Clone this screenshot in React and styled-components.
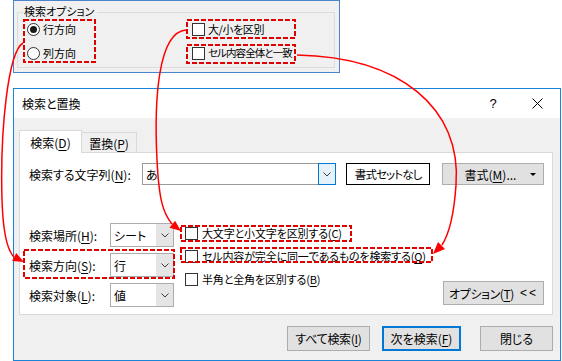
import React from "react";
import styled, { createGlobalStyle } from "styled-components";

const GlobalStyle = createGlobalStyle`
  * { box-sizing: border-box; }
  body {
    margin: 0;
    background: #fff;
    color: #000;
    font-family: "Noto Sans CJK JP", "Noto Sans", sans-serif;
    font-size: 12px;
    font-feature-settings: "palt";
  }
`;

const Page = styled.div`
  position: relative;
  width: 562px;
  height: 361px;
  padding-left: 13px;
  overflow: hidden;
`;

const U = styled.span`
  text-decoration: underline;
  text-underline-offset: 2px;
  text-decoration-thickness: 1px;
`;

/* ---------- old options panel ---------- */

const TopPanel = styled.div`
  display: flex;
  flex-direction: column;
  width: 327px;
  height: 73px;
  padding: 4px 4px 4px 3px;
  background: #f0f0f0;
  border: 1px solid #4c84cc;
`;

const OptionGroup = styled.fieldset`
  flex: 1;
  min-width: 0;
  margin: 0;
  padding: 0;
  border: 1px solid #dcdcdc;
`;

const GroupLegend = styled.legend`
  margin-left: 5px;
  padding: 0 3px 3px 1px;
  font-size: 11px;
  line-height: 12px;
`;

const OptionGrid = styled.div`
  display: grid;
  grid-template-columns: 165px 1fr;
  grid-template-rows: 18px 18px;
  grid-auto-flow: column;
  row-gap: 6px;
  padding-left: 9px;
`;

const Choice = styled.div`
  display: flex;
  align-items: center;
  gap: ${(p) => p.$gap || 3}px;
  font-size: ${(p) => p.$size || 12}px;
  letter-spacing: ${(p) => p.$spacing || 0}px;
  line-height: 16px;
  white-space: nowrap;
`;

const RadioMark = styled.span`
  display: flex;
  align-items: center;
  justify-content: center;
  width: 13px;
  height: 13px;
  border: 1px solid #333;
  border-radius: 50%;
  background: #fff;
  &::after {
    content: "";
    width: 7px;
    height: 7px;
    border-radius: 50%;
    background: ${(p) => (p.$checked ? "#1a1a1a" : "transparent")};
  }
`;

const CheckMark = styled.span`
  flex: none;
  width: 13px;
  height: 13px;
  border: 1px solid #333;
  background: #fff;
`;

/* ---------- dialog ---------- */

const Dialog = styled.div`
  display: flex;
  flex-direction: column;
  width: 548px;
  height: 273px;
  margin-top: 15px;
  background: #f0f0f0;
  border: 1px solid #1a84d8;
`;

const TitleBar = styled.div`
  display: flex;
  align-items: center;
  height: 29px;
  padding-left: 8px;
  background: #fff;
`;

const TitleText = styled.div`
  flex: 1;
  font-size: 12px;
`;

const TitleButton = styled.div`
  display: flex;
  align-items: center;
  justify-content: center;
  width: ${(p) => p.$w}px;
  height: 29px;
  font-family: "Liberation Sans", sans-serif;
  font-size: 13px;
`;

const DialogBody = styled.div`
  flex: 1;
  display: flex;
  flex-direction: column;
  padding: 12px 7px 0 5px;
`;

const TabList = styled.div`
  position: relative;
  z-index: 1;
  display: flex;
  align-items: flex-end;
  height: 23px;
  margin-bottom: -1px;
`;

const Tab = styled.div`
  display: flex;
  align-items: center;
  justify-content: center;
  width: ${(p) => p.$w}px;
  height: ${(p) => (p.$active ? 23 : 20)}px;
  margin-bottom: ${(p) => (p.$active ? 0 : 1)}px;
  padding-top: 1px;
  border: 1px solid #d9d9d9;
  border-bottom: none;
  border-left: ${(p) => (p.$active ? "1px solid #d9d9d9" : "none")};
  background: ${(p) => (p.$active ? "#fff" : "#f0f0f0")};
  font-size: 12px;
`;

const TabPanel = styled.div`
  display: flex;
  flex-direction: column;
  height: 163px;
  padding: 10px 8px 0 9px;
  background: #fff;
  border: 1px solid #d9d9d9;
`;

const FindRow = styled.div`
  display: flex;
  align-items: center;
  height: 22px;
`;

const FieldLabel = styled.div`
  flex: none;
  width: ${(p) => p.$w}px;
  font-size: 12px;
  white-space: nowrap;
`;

const Combo = styled.div`
  display: flex;
  width: 195px;
  height: 22px;
  border: 1px solid #9a9a9a;
  background: #fff;
`;

const FieldText = styled.div`
  flex: 1;
  display: flex;
  align-items: center;
  padding-left: 3px;
  font-size: 12px;
`;

const ComboButton = styled.div`
  display: flex;
  align-items: center;
  justify-content: center;
  width: 18px;
  margin: -1px -1px -1px 0;
  border: 1px solid #0078d7;
  background: #e5f1fb;
`;

const FormatPreview = styled.div`
  display: flex;
  align-items: center;
  justify-content: center;
  width: 84px;
  height: 22px;
  margin-left: 10px;
  border: 1px solid #000;
  background: #fff;
  font-size: 11.5px;
  letter-spacing: -0.9px;
`;

const Button = styled.div`
  display: flex;
  align-items: center;
  justify-content: center;
  flex: none;
  width: ${(p) => p.$w}px;
  height: ${(p) => p.$h || 22}px;
  margin-left: ${(p) => p.$ml || 0}px;
  background: #e1e1e1;
  border: ${(p) => (p.$primary ? "2px solid #0078d7" : "1px solid #adadad")};
  font-size: 12px;
  letter-spacing: ${(p) => p.$spacing || 0}px;
  white-space: nowrap;
`;

const MenuButtonText = styled.span`
  flex: 1;
  text-align: center;
  padding-left: 8px;
`;

const MenuArrow = styled.span`
  width: 0;
  height: 0;
  margin-right: 7px;
  border-left: 3px solid transparent;
  border-right: 3px solid transparent;
  border-top: 3px solid #000;
`;

const Chevrons = styled.span`
  margin-left: 6px;
  letter-spacing: 2px;
  font-family: "Liberation Sans", sans-serif;
`;

const LowerSection = styled.div`
  display: flex;
  align-items: flex-start;
  margin-top: 38px;
`;

const SelectColumn = styled.div`
  display: flex;
  flex-direction: column;
  gap: 6px;
`;

const SelectRow = styled.div`
  display: flex;
  align-items: center;
  height: 24px;
`;

const Select = styled.div`
  display: flex;
  width: 64px;
  height: 24px;
  border: 1px solid #acacac;
  background: #fff;
`;

const SelectButton = styled.div`
  display: flex;
  align-items: center;
  justify-content: center;
  width: 17px;
  background: #e5e5e5;
`;

const CheckColumn = styled.div`
  display: flex;
  flex-direction: column;
  gap: 5px;
  margin: 1px 0 0 11px;
`;

const CheckRow = styled(Choice)`
  height: 18px;
`;

const OptionsToggle = styled(Button)`
  margin-left: auto;
  margin-top: 58px;
`;

const ButtonRow = styled.div`
  display: flex;
  justify-content: flex-end;
  margin-top: 11px;
`;

const Overlay = styled.svg`
  position: absolute;
  top: 0;
  left: 0;
  pointer-events: none;
`;

const Chevron = () => (
  <svg width="8" height="5" viewBox="0 0 8 5">
    <polyline points="0.5,0.5 4,4 7.5,0.5" fill="none" stroke="#404040" strokeWidth="1" />
  </svg>
);

const Close = () => (
  <svg width="11" height="11" viewBox="0 0 11 11">
    <path d="M0.5 0.5 L10.5 10.5 M10.5 0.5 L0.5 10.5" stroke="#000" strokeWidth="1" />
  </svg>
);

const selects = [
  { label: <>検索場所(<U>H</U>):</>, value: "シート" },
  { label: <>検索方向(<U>S</U>):</>, value: "行" },
  { label: <>検索対象(<U>L</U>):</>, value: "値" },
];

const checks = [
  <>大文字と小文字を区別する(<U>C</U>)</>,
  <>セル内容が完全に同一であるものを検索する(<U>O</U>)</>,
  <>半角と全角を区別する(<U>B</U>)</>,
];

const boxes = [
  [24, 20, 71, 42],
  [187, 20, 108, 18],
  [187, 45, 108, 18],
  [24, 250, 150, 28],
  [181, 226, 170, 15],
  [181, 248, 251, 14],
];

const curves = [
  {
    d: "M 23 43 C 8 52, 0 130, 2 200 C 3 232, 7 250, 14 257",
    head: "24,262 12.2,261.1 16.2,253.1",
  },
  {
    d: "M 186 30 C 158 32, 154 100, 157 160 C 159 200, 163 213, 172 224",
    head: "181,231 169.5,227.8 175.1,220.7",
  },
  {
    d: "M 297 55 C 400 57, 462 108, 456 185 C 454 215, 449 234, 442 245",
    head: "433,254 445,249 438,242",
  },
];

export default function App() {
  return (
    <Page>
      <GlobalStyle />

      <TopPanel>
        <OptionGroup>
          <GroupLegend>検索オプション</GroupLegend>
          <OptionGrid>
            <Choice $size={11} $gap={3}>
              <RadioMark $checked />行方向
            </Choice>
            <Choice $size={11} $gap={3}>
              <RadioMark />列方向
            </Choice>
            <Choice $size={11} $gap={3} $spacing={-0.4}>
              <CheckMark />大/小を区別
            </Choice>
            <Choice $size={10.5} $gap={3} $spacing={-0.9}>
              <CheckMark />セル内容全体と一致
            </Choice>
          </OptionGrid>
        </OptionGroup>
      </TopPanel>

      <Dialog>
        <TitleBar>
          <TitleText>検索と置換</TitleText>
          <TitleButton $w={44}>?</TitleButton>
          <TitleButton $w={45}>
            <Close />
          </TitleButton>
        </TitleBar>

        <DialogBody>
          <TabList>
            <Tab $active $w={63}>
              検索(<U>D</U>)
            </Tab>
            <Tab $w={55}>
              置換(<U>P</U>)
            </Tab>
          </TabList>

          <TabPanel>
            <FindRow>
              <FieldLabel $w={113}>
                検索する文字列(<U>N</U>):
              </FieldLabel>
              <Combo>
                <FieldText>あ</FieldText>
                <ComboButton>
                  <Chevron />
                </ComboButton>
              </Combo>
              <FormatPreview>書式セットなし</FormatPreview>
              <Button $w={102} $ml={12}>
                <MenuButtonText>
                  書式(<U>M</U>)...
                </MenuButtonText>
                <MenuArrow />
              </Button>
            </FindRow>

            <LowerSection>
              <SelectColumn>
                {selects.map((s, i) => (
                  <SelectRow key={i}>
                    <FieldLabel $w={81}>{s.label}</FieldLabel>
                    <Select>
                      <FieldText>{s.value}</FieldText>
                      <SelectButton>
                        <Chevron />
                      </SelectButton>
                    </Select>
                  </SelectRow>
                ))}
              </SelectColumn>

              <CheckColumn>
                {checks.map((c, i) => (
                  <CheckRow key={i} $gap={4} $size={11} $spacing={-0.15}>
                    <CheckMark />
                    <span>{c}</span>
                  </CheckRow>
                ))}
              </CheckColumn>

              <OptionsToggle $w={101} $h={24} $spacing={-0.4}>
                オプション(<U>T</U>)<Chevrons>&lt;&lt;</Chevrons>
              </OptionsToggle>
            </LowerSection>
          </TabPanel>

          <ButtonRow>
            <Button $w={83} $h={25} $spacing={-0.3}>
              すべて検索(<U>I</U>)
            </Button>
            <Button $w={79} $h={25} $ml={12} $primary>
              次を検索(<U>F</U>)
            </Button>
            <Button $w={73} $h={25} $ml={19}>
              閉じる
            </Button>
          </ButtonRow>
        </DialogBody>
      </Dialog>

      <Overlay width="562" height="361" viewBox="0 0 562 361">
        {boxes.map(([x, y, w, h], i) => (
          <rect key={i} x={x} y={y} width={w} height={h} fill="none" stroke="#e00000" strokeWidth="2" strokeDasharray="5 2" />
        ))}
        {curves.map((c, i) => (
          <g key={i}>
            <path d={c.d} fill="none" stroke="#ff0000" strokeWidth="1.5" />
            <polygon points={c.head} fill="#ff0000" />
          </g>
        ))}
      </Overlay>
    </Page>
  );
}
